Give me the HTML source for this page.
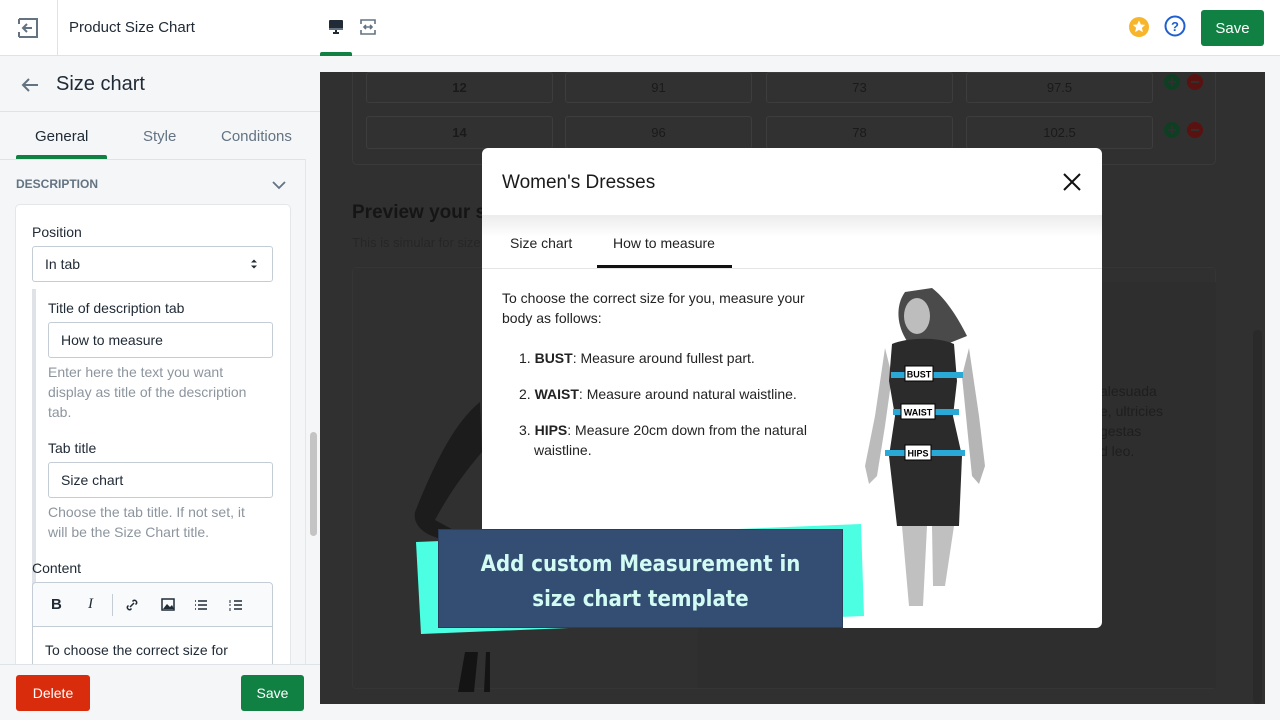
<!DOCTYPE html>
<html><head><meta charset="utf-8">
<style>
*{box-sizing:border-box;margin:0;padding:0}
body{width:1280px;height:720px;overflow:hidden;position:relative;font-family:"Liberation Sans",sans-serif;background:#f4f6f8;color:#212b36}
.abs{position:absolute}
.top{left:0;top:0;width:1280px;height:56px;background:#fff;border-bottom:1px solid #dfe3e8}
.inp{position:absolute;background:#fff;border:1px solid #c4cdd5;border-radius:3px;font-size:14px;padding-left:12px;display:flex;align-items:center;color:#212b36}
.lbl{position:absolute;font-size:14px;color:#212b36}
.help{position:absolute;font-size:14px;color:#8c959e;line-height:20px}
.cell{position:absolute;height:31px;border:1px solid #3d3d3d;border-radius:3px;font-size:13px;color:#1a1a1a;display:flex;align-items:center;justify-content:center;background:#313131}
.btn{position:absolute;color:#fff;font-size:14px;border-radius:3px;display:flex;align-items:center;justify-content:center}
</style></head><body>
<div class="abs top"></div>
<div class="abs" style="left:57px;top:0;width:1px;height:55px;background:#dfe3e8"></div>
<svg class="abs" style="left:17px;top:17px" width="22" height="22" viewBox="0 0 22 22"><path d="M2 2h18v18H2" fill="none" stroke="#637381" stroke-width="2"/><path d="M2 2v5M2 15v5M15 11H6M10 7l-4 4 4 4" fill="none" stroke="#637381" stroke-width="2"/></svg>
<div class="abs" style="left:69px;top:19px;font-size:15px;color:#212b36">Product Size Chart</div>
<svg class="abs" style="left:328px;top:19px" width="16" height="16" viewBox="0 0 16 16"><rect x="1" y="1" width="14" height="10" rx="1" fill="#212b36"/><rect x="1" y="9" width="14" height="2" fill="#637381"/><path d="M5 14h6M8 11v3" stroke="#212b36" stroke-width="2"/></svg>
<svg class="abs" style="left:360px;top:19px" width="16" height="16" viewBox="0 0 16 16"><path d="M1 5V1h14v4M1 11v4h14v-4M4 8h8M6 6l-2 2 2 2M10 6l2 2-2 2" fill="none" stroke="#637381" stroke-width="1.6"/></svg>
<div class="abs" style="left:320px;top:52px;width:32px;height:4px;background:#108043;border-radius:2px 2px 0 0"></div>
<svg class="abs" style="left:1128px;top:16px" width="22" height="22" viewBox="0 0 22 22"><circle cx="11" cy="11" r="10" fill="#f7b52b"/><path d="M11 4.5l1.9 4 4.3.4-3.3 2.9 1 4.3L11 13.9l-3.9 2.2 1-4.3-3.3-2.9 4.3-.4z" fill="#fff"/></svg>
<svg class="abs" style="left:1164px;top:15px" width="22" height="22" viewBox="0 0 22 22"><circle cx="11" cy="11" r="9.5" fill="none" stroke="#1f5fd1" stroke-width="2"/><text x="11" y="16" text-anchor="middle" font-family="Liberation Sans" font-weight="bold" font-size="13" fill="#1f5fd1">?</text></svg>
<div class="btn" style="left:1201px;top:10px;width:63px;height:36px;background:#108043;font-size:15px">Save</div>

<!-- left panel -->
<svg class="abs" style="left:20px;top:76px" width="20" height="18" viewBox="0 0 20 18"><path d="M18 9H3M9 3L3 9l6 6" fill="none" stroke="#637381" stroke-width="2"/></svg>
<div class="abs" style="left:56px;top:73px;font-size:20px;color:#212b36">Size chart</div>
<div class="abs" style="left:0;top:111px;width:320px;height:1px;background:#dfe3e8"></div>
<div class="abs" style="left:35px;top:128px;font-size:15px;color:#212b36">General</div>
<div class="abs" style="left:143px;top:128px;font-size:15px;color:#637381">Style</div>
<div class="abs" style="left:221px;top:128px;font-size:15px;color:#637381">Conditions</div>
<div class="abs" style="left:16px;top:155px;width:91px;height:4px;background:#108043;border-radius:2px 2px 0 0"></div>
<div class="abs" style="left:0;top:159px;width:305px;height:1px;background:#dfe3e8"></div>
<div class="abs" style="left:305px;top:159px;width:1px;height:506px;background:#e4e7ea"></div>
<div class="abs" style="left:16px;top:177px;font-size:12px;font-weight:bold;color:#637381">DESCRIPTION</div>
<svg class="abs" style="left:272px;top:180px" width="14" height="10" viewBox="0 0 14 10"><path d="M1 2l6 6 6-6" fill="none" stroke="#637381" stroke-width="1.8"/></svg>
<div class="abs" style="left:16px;top:205px;width:274px;height:470px;background:#fff;border-radius:4px;box-shadow:0 0 0 1px #e4e7ea"></div>
<div class="lbl" style="left:32px;top:224px">Position</div>
<div class="inp" style="left:32px;top:246px;width:241px;height:36px">In tab</div>
<svg class="abs" style="left:250px;top:258px" width="8" height="12" viewBox="0 0 8 12"><path d="M1 4.5L4 1.5 7 4.5zM1 7.5L4 10.5 7 7.5z" fill="#212b36"/></svg>
<div class="abs" style="left:32px;top:289px;width:4px;height:380px;background:#dfe3e8"></div>
<div class="lbl" style="left:48px;top:300px">Title of description tab</div>
<div class="inp" style="left:48px;top:322px;width:225px;height:36px">How to measure</div>
<div class="help" style="left:48px;top:362px;width:212px">Enter here the text you want display as title of the description tab.</div>
<div class="lbl" style="left:48px;top:440px">Tab title</div>
<div class="inp" style="left:48px;top:462px;width:225px;height:36px">Size chart</div>
<div class="help" style="left:48px;top:502px;width:212px">Choose the tab title. If not set, it will be the Size Chart title.</div>
<div class="lbl" style="left:32px;top:560px">Content</div>
<div class="abs" style="left:32px;top:582px;width:241px;height:90px;border:1px solid #c4cdd5;border-radius:4px;background:#fff"></div>
<div class="abs" style="left:33px;top:583px;width:239px;height:44px;background:#f9fafb;border-bottom:1px solid #c4cdd5;border-radius:4px 4px 0 0"></div>
<div class="abs" style="left:51px;top:596px;font-size:15px;font-weight:bold;color:#212b36">B</div>
<div class="abs" style="left:88px;top:596px;font-size:15px;font-style:italic;font-family:'Liberation Serif',serif;color:#212b36">I</div>
<div class="abs" style="left:112px;top:594px;width:1px;height:22px;background:#c4cdd5"></div>
<svg class="abs" style="left:124px;top:597px" width="150" height="16" viewBox="0 0 150 16"><path d="M6 10l4-4M4.5 8.5l-1 1a2.3 2.3 0 0 0 3 3l1-1M11.5 7.5l1-1a2.3 2.3 0 0 0-3-3l-1 1" fill="none" stroke="#212b36" stroke-width="1.5"/><rect x="38" y="2" width="12" height="11" fill="none" stroke="#212b36" stroke-width="1.5"/><path d="M39 12l4-5 3 3 2-2 2 4z" fill="#212b36"/><path d="M74 4h9M74 8h9M74 12h9M71 4h1M71 8h1M71 12h1M110 4h8M110 8h8M110 12h8" stroke="#212b36" stroke-width="1.6"/><path d="M106 3v3M106 7v2M106 11v3" stroke="#212b36" stroke-width="1"/></svg>
<div class="abs" style="left:45px;top:642px;font-size:14px;color:#212b36">To choose the correct size for</div>
<div class="abs" style="left:310px;top:432px;width:7px;height:104px;background:#c4c4c4;border-radius:4px"></div>
<div class="abs" style="left:0;top:664px;width:320px;height:56px;background:#f4f6f8;border-top:1px solid #dfe3e8"></div>
<div class="btn" style="left:16px;top:675px;width:74px;height:36px;background:#d82c0d">Delete</div>
<div class="btn" style="left:241px;top:675px;width:63px;height:36px;background:#108043">Save</div>

<!-- right dark area -->
<div class="abs" style="left:320px;top:72px;width:945px;height:632px;background:#303030;overflow:hidden">
  <div class="abs" style="left:32px;top:-12px;width:864px;height:105px;border:1px solid #3a3a3a;border-radius:5px"></div>
  <div class="cell" style="left:46px;top:0;width:187px;font-weight:bold">12</div>
  <div class="cell" style="left:245px;top:0;width:187px">91</div>
  <div class="cell" style="left:446px;top:0;width:187px">73</div>
  <div class="cell" style="left:646px;top:0;width:187px">97.5</div>
  <div class="cell" style="left:46px;top:44px;width:187px;height:33px;font-weight:bold">14</div>
  <div class="cell" style="left:245px;top:44px;width:187px;height:33px">96</div>
  <div class="cell" style="left:446px;top:44px;width:187px;height:33px">78</div>
  <div class="cell" style="left:646px;top:44px;width:187px;height:33px">102.5</div>
  <svg class="abs" style="left:844px;top:2px" width="42" height="80" viewBox="0 0 42 80"><circle cx="8" cy="8" r="8" fill="#0e3f22"/><circle cx="31" cy="8" r="8" fill="#5a1210"/><circle cx="8" cy="56" r="8" fill="#0e3f22"/><circle cx="31" cy="56" r="8" fill="#5a1210"/><path d="M4 8h8M8 4v8M27 8h8M4 56h8M8 52v8M27 56h8" stroke="#303030" stroke-width="2"/></svg>
  <div class="abs" style="left:32px;top:130px;font-size:19px;font-weight:bold;color:#151515">Preview your size chart</div>
  <div class="abs" style="left:32px;top:163px;font-size:13px;color:#262626">This is simular for size chart popup</div>
  <div class="abs" style="left:32px;top:195px;width:864px;height:422px;border:1px solid #353535;border-radius:4px"></div>
  <div class="abs" style="left:378px;top:210px;width:518px;height:406px;background:#2e2e2e"></div>
  <div class="abs" style="left:780px;top:309px;font-size:14px;line-height:20px;color:#1e1e1e">alesuada<br>e, ultricies<br>gestas<br>d leo.</div>
  <svg class="abs" style="left:90px;top:300px" width="80" height="320" viewBox="0 0 80 320"><path d="M70 30 C45 50 25 90 5 140 C3 150 10 160 25 165 L60 180 L62 168 L25 148 C40 120 55 100 72 80Z" fill="#1c1c1c"/><path d="M48 320 L55 280 L68 280 L64 320Z M74 320 L76 280 L80 280 L80 320Z" fill="#141414"/></svg>
</div>
<div class="abs" style="left:1265px;top:72px;width:15px;height:648px;background:#f4f6f8"></div>
<div class="abs" style="left:1253px;top:330px;width:9px;height:374px;background:#2a2a2a;border-radius:4px"></div>

<!-- modal -->
<div class="abs" style="left:482px;top:148px;width:620px;height:480px;background:#fff;border-radius:6px;overflow:hidden">
  <div class="abs" style="left:20px;top:24px;font-size:19px;color:#1a1a1a">Women's Dresses</div>
  <svg class="abs" style="left:581px;top:25px" width="18" height="18" viewBox="0 0 18 18"><path d="M1 1l16 16M17 1L1 17" stroke="#111" stroke-width="2"/></svg>
  <div class="abs" style="left:0;top:67px;width:620px;height:22px;background:linear-gradient(#ececec,#fff)"></div>
  <div class="abs" style="left:28px;top:87px;font-size:14px;color:#222">Size chart</div>
  <div class="abs" style="left:131px;top:87px;font-size:14px;color:#222">How to measure</div>
  <div class="abs" style="left:115px;top:117px;width:135px;height:3px;background:#111"></div>
  <div class="abs" style="left:0;top:120px;width:620px;height:1px;background:#e5e5e5"></div>
  <div class="abs" style="left:20px;top:140px;width:320px;font-size:14px;line-height:20px;color:#222">To choose the correct size for you, measure your body as follows:</div>
  <div class="abs" style="left:37px;top:200px;width:300px;font-size:14px;line-height:20px;color:#222">1. <b>BUST</b>: Measure around fullest part.</div>
  <div class="abs" style="left:37px;top:236px;width:300px;font-size:14px;line-height:20px;color:#222">2. <b>WAIST</b>: Measure around natural waistline.</div>
  <div class="abs" style="left:37px;top:272px;width:300px;font-size:14px;line-height:20px;color:#222;padding-left:15px;text-indent:-15px">3. <b>HIPS</b>: Measure 20cm down from the natural waistline.</div>
  <svg class="abs" style="left:375px;top:138px" width="140" height="322" viewBox="0 0 140 322">
    <path d="M48 6 L75 2 C88 12 100 30 110 50 L85 60 L50 55 C40 40 38 20 48 6Z" fill="#4a4a4a"/>
    <ellipse cx="60" cy="30" rx="13" ry="18" fill="#bdbdbd"/>
    <path d="M28 62 L18 130 L8 180 L12 198 L20 190 L28 140 L35 90Z" fill="#bbb"/>
    <path d="M112 62 L122 130 L128 180 L122 198 L115 190 L110 140 L105 90Z" fill="#b5b5b5"/>
    <path d="M35 58 C48 52 80 50 97 58 L100 95 L96 130 L105 170 L102 240 L40 240 L32 170 L38 130 L32 95Z" fill="#2b2b2b"/>
    <path d="M45 240 L52 320 L66 320 L70 240Z M75 240 L76 300 L88 300 L97 240Z" fill="#c0c0c0"/>
    <path d="M34 86 L106 86 L106 92 L34 92Z M36 123 L102 123 L102 129 L36 129Z M28 164 L108 164 L108 170 L28 170Z" fill="#2aa9d6"/>
    <rect x="48" y="80" width="28" height="15" fill="#fff" stroke="#000"/><text x="62" y="91.5" text-anchor="middle" font-size="9" font-weight="bold" font-family="Liberation Sans" fill="#000">BUST</text>
    <rect x="44" y="118" width="34" height="15" fill="#fff" stroke="#000"/><text x="61" y="129.5" text-anchor="middle" font-size="9" font-weight="bold" font-family="Liberation Sans" fill="#000">WAIST</text>
    <rect x="48" y="159" width="26" height="15" fill="#fff" stroke="#000"/><text x="61" y="170.5" text-anchor="middle" font-size="9" font-weight="bold" font-family="Liberation Sans" fill="#000">HIPS</text>
  </svg>
</div>

<!-- banner -->
<svg class="abs" style="left:414px;top:520px" width="452" height="118" viewBox="0 0 452 118"><path d="M2 22 L447 4 L450 96 L7 114Z" fill="#4cffe2"/></svg>
<div class="abs" style="left:439px;top:530px;width:403px;height:97px;background:#344d72;box-shadow:0 0 0 1px #2a3e5c"></div>
<div class="abs" style="left:439px;top:547px;width:403px;text-align:center;font-size:22px;line-height:35px;font-weight:bold;color:#d2fbf3;font-family:'DejaVu Sans Condensed','Liberation Sans',sans-serif">Add custom Measurement in<br>size chart template</div>
</body></html>
